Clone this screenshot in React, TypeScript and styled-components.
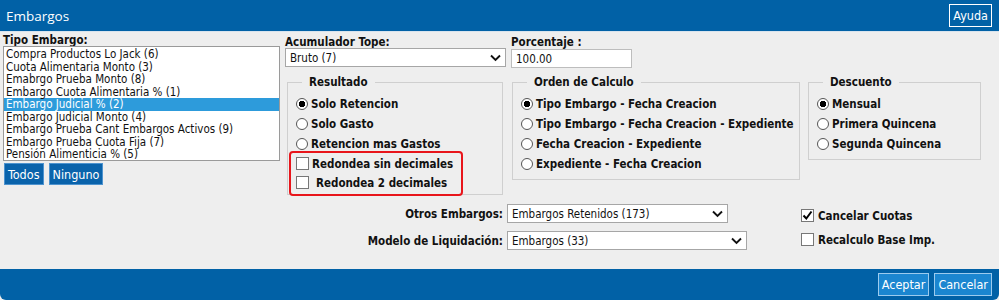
import React from 'react';
import styled, { createGlobalStyle } from 'styled-components';

const blue = '#0161a6';
const font = '"DejaVu Sans Condensed", "Liberation Sans", Tahoma, sans-serif';

const GlobalStyle = createGlobalStyle`
  html, body {
    margin: 0;
    padding: 0;
    background: #ffffff;
  }
  body {
    font-family: ${font};
    font-size: 11.5px;
    color: #111;
  }
`;

const Dialog = styled.div`
  width: 999px;
  height: 300px;
  display: flex;
  flex-direction: column;
  background: #eeeeee;
  overflow: hidden;
`;

const Header = styled.div`
  height: 32px;
  flex: none;
  background: ${blue};
  border-bottom: 1px solid #d8e4ee;
  box-sizing: border-box;
  display: flex;
  align-items: center;
  justify-content: space-between;
  padding: 0 7px 0 6px;
`;

const Title = styled.div`
  color: #fff;
  font-family: "Open Sans", "DejaVu Sans", sans-serif;
  font-size: 13.5px;
`;

const BlueButton = styled.button<{ $variant?: 'header' | 'footer' | 'small' }>`
  font-family: ${font};
  font-size: 12.5px;
  color: #fff;
  cursor: pointer;
  padding: 0 3px;
  height: ${p => (p.$variant === 'small' ? '22px' : '23px')};
  background: ${p => (p.$variant === 'footer' ? '#1b86d0' : p.$variant === 'header' ? blue : '#0a63ab')};
  border: 1px solid ${p => (p.$variant === 'header' ? '#ffffff' : p.$variant === 'footer' ? '#9ccbee' : '#4d93cf')};
`;

const Body = styled.div`
  flex: 1;
  display: flex;
  flex-direction: column;
  padding: 2px 0 0 3px;
`;

const TopSection = styled.div`
  display: flex;
  align-items: flex-start;
  height: 170px;
  flex: none;
`;

const LeftCol = styled.div`
  width: 277px;
  display: flex;
  flex-direction: column;
`;

const FieldLabel = styled.div`
  font-weight: bold;
  height: 12px;
  line-height: 12px;
`;

const ListBox = styled.div`
  height: 115px;
  background: #fff;
  border: 1px solid #9a9a9a;
  box-sizing: border-box;
  padding-top: 1px;
`;

const ListItem = styled.div<{ $selected?: boolean }>`
  height: 12.5px;
  line-height: 12.5px;
  padding-left: 2px;
  white-space: nowrap;
  background: ${p => (p.$selected ? '#2d9bdb' : 'transparent')};
  color: ${p => (p.$selected ? '#fff' : '#111')};
`;

const ButtonRow = styled.div`
  display: flex;
  gap: 5px;
  margin: 2px 0 0 1px;
`;

const RightArea = styled.div`
  margin-left: 5px;
  display: flex;
  flex-direction: column;
`;

const FieldsRow = styled.div`
  display: flex;
  align-items: flex-start;
`;

const Field = styled.div<{ $width: number; $gap?: number }>`
  width: ${p => p.$width}px;
  margin-left: ${p => p.$gap ?? 0}px;
  display: flex;
  flex-direction: column;
  padding-top: 2px;
`;

const SelectBox = styled.div<{ $width?: number }>`
  width: ${p => (p.$width ? `${p.$width}px` : '100%')};
  height: 19px;
  box-sizing: border-box;
  background: #fff;
  border: 1px solid #a6a6a6;
  display: flex;
  align-items: center;
  justify-content: space-between;
  padding: 0 4px 0 4px;
  white-space: nowrap;
`;

const TextInput = styled.div`
  height: 19px;
  margin-top: 1px;
  box-sizing: border-box;
  background: #fff;
  border: 1px solid #bdbdbd;
  display: flex;
  align-items: center;
  padding-left: 4px;
`;

const GroupsRow = styled.div`
  display: flex;
  align-items: flex-start;
  margin-top: 7px;
`;

const Group = styled.fieldset<{ $width: number; $height: number; $gap: number }>`
  width: ${p => p.$width}px;
  height: ${p => p.$height}px;
  margin: 0 0 0 ${p => p.$gap}px;
  box-sizing: border-box;
  border: 1px solid #cfcfcf;
  padding: 5px 0 0 8px;
  display: flex;
  flex-direction: column;
`;

const Legend = styled.legend`
  font-weight: bold;
  margin-left: 6px;
  padding: 0 7px;
`;

const OptionRow = styled.div<{ $indent?: number; $h?: number }>`
  display: flex;
  flex: none;
  align-items: center;
  height: ${p => p.$h ?? 20}px;
  font-weight: bold;
  white-space: nowrap;
  gap: ${p => p.$indent ?? 3}px;
`;

const Radio = styled.span<{ $checked?: boolean }>`
  width: 12px;
  height: 12px;
  box-sizing: border-box;
  border-radius: 50%;
  border: 1px solid #555;
  background: ${p => (p.$checked ? 'radial-gradient(circle, #000 0 3px, #fff 3.5px)' : '#fff')};
  flex: none;
`;

const CheckBox = styled.span`
  width: 13px;
  height: 13px;
  box-sizing: border-box;
  border: 1px solid #777;
  background: #fff;
  flex: none;
  display: flex;
  align-items: center;
  justify-content: center;
`;

const Highlight = styled.div`
  flex: none;
  margin: -3px 0 0 -7px;
  width: 174px;
  box-sizing: border-box;
  border: 2px solid #e8151b;
  border-radius: 4px;
  padding: 1px 0 2px 5px;
`;

const BottomSection = styled.div`
  display: grid;
  grid-template-columns: 504px 294px auto;
  grid-auto-rows: 19px;
  row-gap: 8px;
  align-items: center;
`;

const RowLabel = styled.div`
  font-weight: bold;
  text-align: right;
  padding-right: 4px;
`;

const SideCheck = styled.div<{ $shift: number }>`
  display: flex;
  align-items: center;
  gap: 4px;
  font-weight: bold;
  white-space: nowrap;
  margin-top: ${p => p.$shift}px;
`;

const Footer = styled.div`
  height: 31px;
  flex: none;
  background: ${blue};
  border-radius: 0 0 6px 6px;
  display: flex;
  align-items: center;
  justify-content: flex-end;
  gap: 5px;
  padding: 0 7px 0 0;
`;

const Chevron = () => (
  <svg width="11" height="8" viewBox="0 0 11 8">
    <path d="M1 1.5 L5.5 6 L10 1.5" fill="none" stroke="#111" strokeWidth="1.9" />
  </svg>
);

const Tick = () => (
  <svg width="11" height="11" viewBox="0 0 11 11">
    <path d="M1.5 5.5 L4.3 8.5 L9.5 1.5" fill="none" stroke="#000" strokeWidth="2" />
  </svg>
);

const tipos = [
  'Compra Productos Lo Jack (6)',
  'Cuota Alimentaria Monto (3)',
  'Emabrgo Prueba Monto (8)',
  'Embargo Cuota Alimentaria % (1)',
  'Embargo Judicial % (2)',
  'Embargo Judicial Monto (4)',
  'Embargo Prueba Cant Embargos Activos (9)',
  'Embargo Prueba Cuota Fija (7)',
  'Pensión Alimenticia % (5)',
];

const orden = [
  'Tipo Embargo - Fecha Creacion',
  'Tipo Embargo - Fecha Creacion - Expediente',
  'Fecha Creacion - Expediente',
  'Expediente - Fecha Creacion',
];

const descuento = ['Mensual', 'Primera Quincena', 'Segunda Quincena'];

export default function App() {
  return (
    <Dialog>
      <GlobalStyle />
      <Header>
        <Title>Embargos</Title>
        <BlueButton $variant="header">Ayuda</BlueButton>
      </Header>
      <Body>
        <TopSection>
          <LeftCol>
            <FieldLabel>Tipo Embargo:</FieldLabel>
            <ListBox>
              {tipos.map(t => (
                <ListItem key={t} $selected={t === 'Embargo Judicial % (2)'}>{t}</ListItem>
              ))}
            </ListBox>
            <ButtonRow>
              <BlueButton $variant="small">Todos</BlueButton>
              <BlueButton $variant="small">Ninguno</BlueButton>
            </ButtonRow>
          </LeftCol>
          <RightArea>
            <FieldsRow>
              <Field $width={221}>
                <FieldLabel>Acumulador Tope:</FieldLabel>
                <SelectBox>
                  <span>Bruto (7)</span>
                  <Chevron />
                </SelectBox>
              </Field>
              <Field $width={121} $gap={5}>
                <FieldLabel>Porcentaje :</FieldLabel>
                <TextInput>100.00</TextInput>
              </Field>
            </FieldsRow>
            <GroupsRow>
              <Group $width={216} $height={120} $gap={2}>
                <Legend>Resultado</Legend>
                <OptionRow><Radio $checked />Solo Retencion</OptionRow>
                <OptionRow><Radio />Solo Gasto</OptionRow>
                <OptionRow><Radio />Retencion mas Gastos</OptionRow>
                <Highlight>
                  <OptionRow $h={19}><CheckBox />Redondea sin decimales</OptionRow>
                  <OptionRow $h={19} $indent={7}><CheckBox />Redondea 2 decimales</OptionRow>
                </Highlight>
              </Group>
              <Group $width={288} $height={105} $gap={9}>
                <Legend>Orden de Calculo</Legend>
                {orden.map((o, i) => (
                  <OptionRow key={o}><Radio $checked={i === 0} />{o}</OptionRow>
                ))}
              </Group>
              <Group $width={173} $height={85} $gap={8}>
                <Legend>Descuento</Legend>
                {descuento.map((d, i) => (
                  <OptionRow key={d}><Radio $checked={i === 0} />{d}</OptionRow>
                ))}
              </Group>
            </GroupsRow>
          </RightArea>
        </TopSection>
        <BottomSection>
          <RowLabel>Otros Embargos:</RowLabel>
          <SelectBox $width={221}>
            <span>Embargos Retenidos (173)</span>
            <Chevron />
          </SelectBox>
          <SideCheck $shift={4}>
            <CheckBox><Tick /></CheckBox>
            Cancelar Cuotas
          </SideCheck>
          <RowLabel>Modelo de Liquidación:</RowLabel>
          <SelectBox $width={240}>
            <span>Embargos (33)</span>
            <Chevron />
          </SelectBox>
          <SideCheck $shift={-2}>
            <CheckBox />
            Recalculo Base Imp.
          </SideCheck>
        </BottomSection>
      </Body>
      <Footer>
        <BlueButton $variant="footer">Aceptar</BlueButton>
        <BlueButton $variant="footer">Cancelar</BlueButton>
      </Footer>
    </Dialog>
  );
}
